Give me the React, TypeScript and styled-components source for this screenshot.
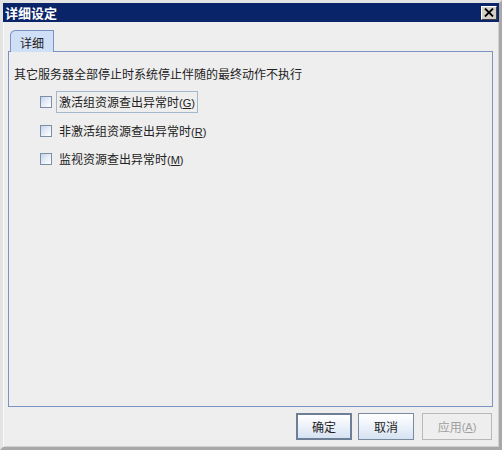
import React from "react";
import styled, { createGlobalStyle } from "styled-components";

const Global = createGlobalStyle`
  html, body { margin: 0; padding: 0; background: #eeeeee; }
  body { font-family: "Noto Sans CJK SC", "Liberation Sans", sans-serif; font-size: 12px; color: #222; }
  * { box-sizing: border-box; }
`;

const Window = styled.div`
  width: 502px;
  height: 450px;
  background: #eeeeee;
  border-top: 3px solid #e4e4e4;
  border-left: 3px solid #e4e4e4;
  border-right: 3px solid #a8a8a8;
  border-bottom: 3px solid #a8a8a8;
  box-shadow: inset 1px 1px 0 #f8f8f8, inset -1px -1px 0 #d0d0d0;
  display: flex;
  flex-direction: column;
`;

const TitleBar = styled.div`
  height: 19px;
  background: #0a246a;
  display: flex;
  align-items: center;
  justify-content: space-between;
  padding: 0 2px 0 2px;
`;

const Title = styled.span`
  color: #ffffff;
  font-weight: bold;
  font-size: 13px;
  line-height: 19px;
`;

const CloseButton = styled.div`
  width: 16px;
  height: 14px;
  background: #d4d0c8;
  border-top: 1px solid #ffffff;
  border-left: 1px solid #ffffff;
  border-right: 1px solid #404040;
  border-bottom: 1px solid #404040;
  display: flex;
  align-items: center;
  justify-content: center;
`;

const Body = styled.div`
  flex: 1;
  display: flex;
  flex-direction: column;
  padding: 8px 6px 0 5px;
`;

const TabStrip = styled.div`
  display: flex;
  padding-left: 2px;
  height: 21px;
`;

const Tab = styled.div`
  width: 44px;
  height: 22px;
  background: #cfdff5;
  border: 1px solid #7a93c4;
  border-bottom: none;
  border-top-left-radius: 6px 5px;
  display: flex;
  align-items: center;
  justify-content: center;
  font-size: 12px;
  color: #222;
  z-index: 1;
  padding-top: 1px;
`;

const Panel = styled.div`
  height: 356px;
  border: 1px solid #7a93c4;
  padding: 14px 5px 0 5px;
  display: flex;
  flex-direction: column;
`;

const Description = styled.div`
  font-size: 12px;
  line-height: 16px;
  color: #222;
`;

const Options = styled.div`
  display: flex;
  flex-direction: column;
  gap: 6.5px;
  padding-left: 26px;
  margin-top: 9px;
`;

const Row = styled.label`
  display: flex;
  align-items: center;
  height: 22px;
  gap: 4px;
`;

const Box = styled.span`
  width: 12px;
  height: 12px;
  border: 1px solid #7b8ea8;
  background: linear-gradient(135deg, #c6d3e8 0%, #e6edf7 50%, #ffffff 100%);
`;

const Label = styled.span<{ $focused?: boolean }>`
  font-size: 12px;
  line-height: 20px;
  height: 22px;
  padding: 0 2px 0 2px;
  border: 1px solid ${(p) => (p.$focused ? "#a3b8cc" : "transparent")};
  color: #222;
`;

const Mnemonic = styled.span`
  font-size: 11px;
  font-family: "Liberation Sans", sans-serif;
`;

const Footer = styled.div`
  display: flex;
  justify-content: flex-end;
  gap: 6px;
  padding: 6px 1px 0 0;
`;

const Button = styled.div<{ $default?: boolean; $disabled?: boolean; $w: number }>`
  width: ${(p) => p.$w}px;
  height: 27px;
  display: flex;
  align-items: center;
  justify-content: center;
  font-size: 12px;
  color: ${(p) => (p.$disabled ? "#a0a0a0" : "#222")};
  border: ${(p) => (p.$default ? "2px solid #6d7f96" : p.$disabled ? "1px solid #b8b8b8" : "1px solid #7a8aa0")};
  background: ${(p) =>
    p.$disabled
      ? "#eeeeee"
      : "linear-gradient(180deg, #ffffff 0%, #eef3fa 45%, #d6e2f2 100%)"};
  margin-left: ${(p) => (p.$disabled ? "2px" : "0")};
`;

export default function App() {
  return (
    <>
      <Global />
      <Window>
        <TitleBar>
          <Title>详细设定</Title>
          <CloseButton>
            <svg width="10" height="9" viewBox="0 0 10 9">
              <path d="M1 0.5 L9 8.5 M9 0.5 L1 8.5" stroke="#000" strokeWidth="1.8" />
            </svg>
          </CloseButton>
        </TitleBar>
        <Body>
          <TabStrip>
            <Tab>详细</Tab>
          </TabStrip>
          <Panel>
            <Description>其它服务器全部停止时系统停止伴随的最终动作不执行</Description>
            <Options>
              <Row>
                <Box />
                <Label $focused>
                  激活组资源查出异常时<Mnemonic>(<u>G</u>)</Mnemonic>
                </Label>
              </Row>
              <Row>
                <Box />
                <Label>
                  非激活组资源查出异常时<Mnemonic>(<u>R</u>)</Mnemonic>
                </Label>
              </Row>
              <Row>
                <Box />
                <Label>
                  监视资源查出异常时<Mnemonic>(<u>M</u>)</Mnemonic>
                </Label>
              </Row>
            </Options>
          </Panel>
          <Footer>
            <Button $default $w={56}>确定</Button>
            <Button $w={56}>取消</Button>
            <Button $disabled $w={70}>
              应用<Mnemonic>(<u>A</u>)</Mnemonic>
            </Button>
          </Footer>
        </Body>
      </Window>
    </>
  );
}
